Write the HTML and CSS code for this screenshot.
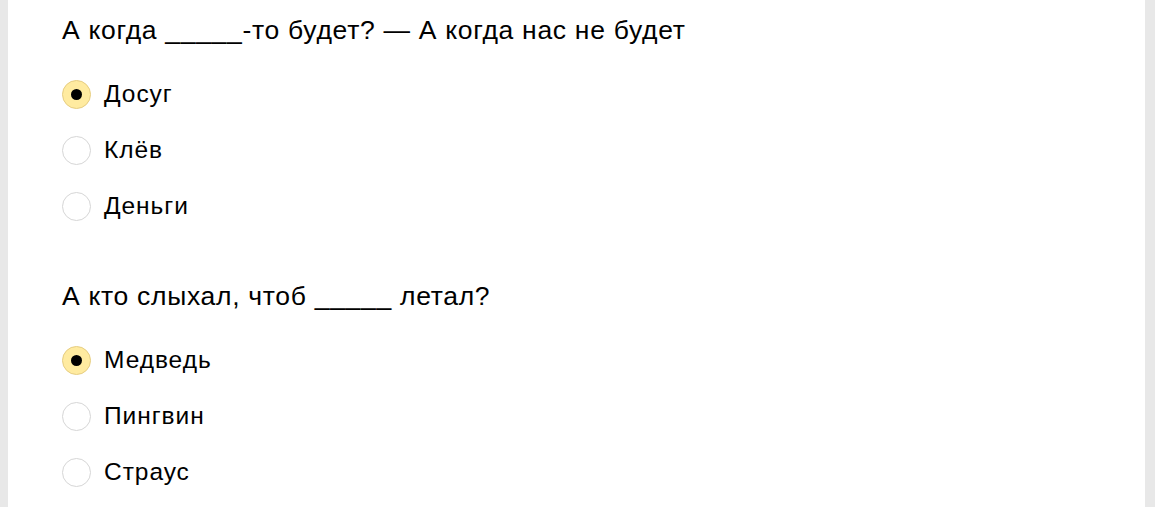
FILE: index.html
```html
<!DOCTYPE html>
<html lang="ru">
<head>
<meta charset="utf-8">
<link rel="stylesheet" href="styles.css">
</head>
<body>
<div class="page">
  <div class="sheet">
    <div class="question">
      <div class="q-title">А когда _____-то будет? — А когда нас не будет</div>
      <div class="options">
        <label class="option"><span class="radio checked"></span><span class="label">Досуг</span></label>
        <label class="option"><span class="radio"></span><span class="label">Клёв</span></label>
        <label class="option"><span class="radio"></span><span class="label">Деньги</span></label>
      </div>
    </div>
    <div class="question">
      <div class="q-title">А кто слыхал, чтоб _____ летал?</div>
      <div class="options">
        <label class="option"><span class="radio checked"></span><span class="label">Медведь</span></label>
        <label class="option"><span class="radio"></span><span class="label">Пингвин</span></label>
        <label class="option"><span class="radio"></span><span class="label">Страус</span></label>
      </div>
    </div>
  </div>
</div>
</body>
</html>
```

FILE: styles.css
```css
html, body {
  margin: 0;
  padding: 0;
  height: 100%;
  overflow: hidden;
}
body {
  background: #e8e8e8;
  font-family: Arial, "Liberation Sans", sans-serif;
  color: #000;
}
.page {
  padding: 0 10px 0 8px;
  height: 100%;
}
.sheet {
  background: #fff;
  height: 100%;
  padding: 15px 0 0 54px;
  box-sizing: border-box;
}
.question {
  margin-bottom: 59px;
}
.q-title {
  font-size: 26.5px;
  letter-spacing: 0.7px;
  line-height: 30px;
  margin-bottom: 33px;
}
.options {
  display: flex;
  flex-direction: column;
  gap: 24px;
}
.option {
  display: flex;
  align-items: center;
  gap: 13px;
  height: 32px;
  font-size: 24.5px;
  letter-spacing: 0.95px;
}
.radio {
  width: 29px;
  height: 29px;
  box-sizing: border-box;
  border-radius: 50%;
  border: 1px solid #d6d6d6;
  background: #fff;
  display: flex;
  align-items: center;
  justify-content: center;
  flex: none;
}
.radio.checked {
  background: #ffeba0;
  border-color: #e6cd82;
}
.radio.checked::after {
  content: "";
  width: 11px;
  height: 11px;
  border-radius: 50%;
  background: #000;
}
```
